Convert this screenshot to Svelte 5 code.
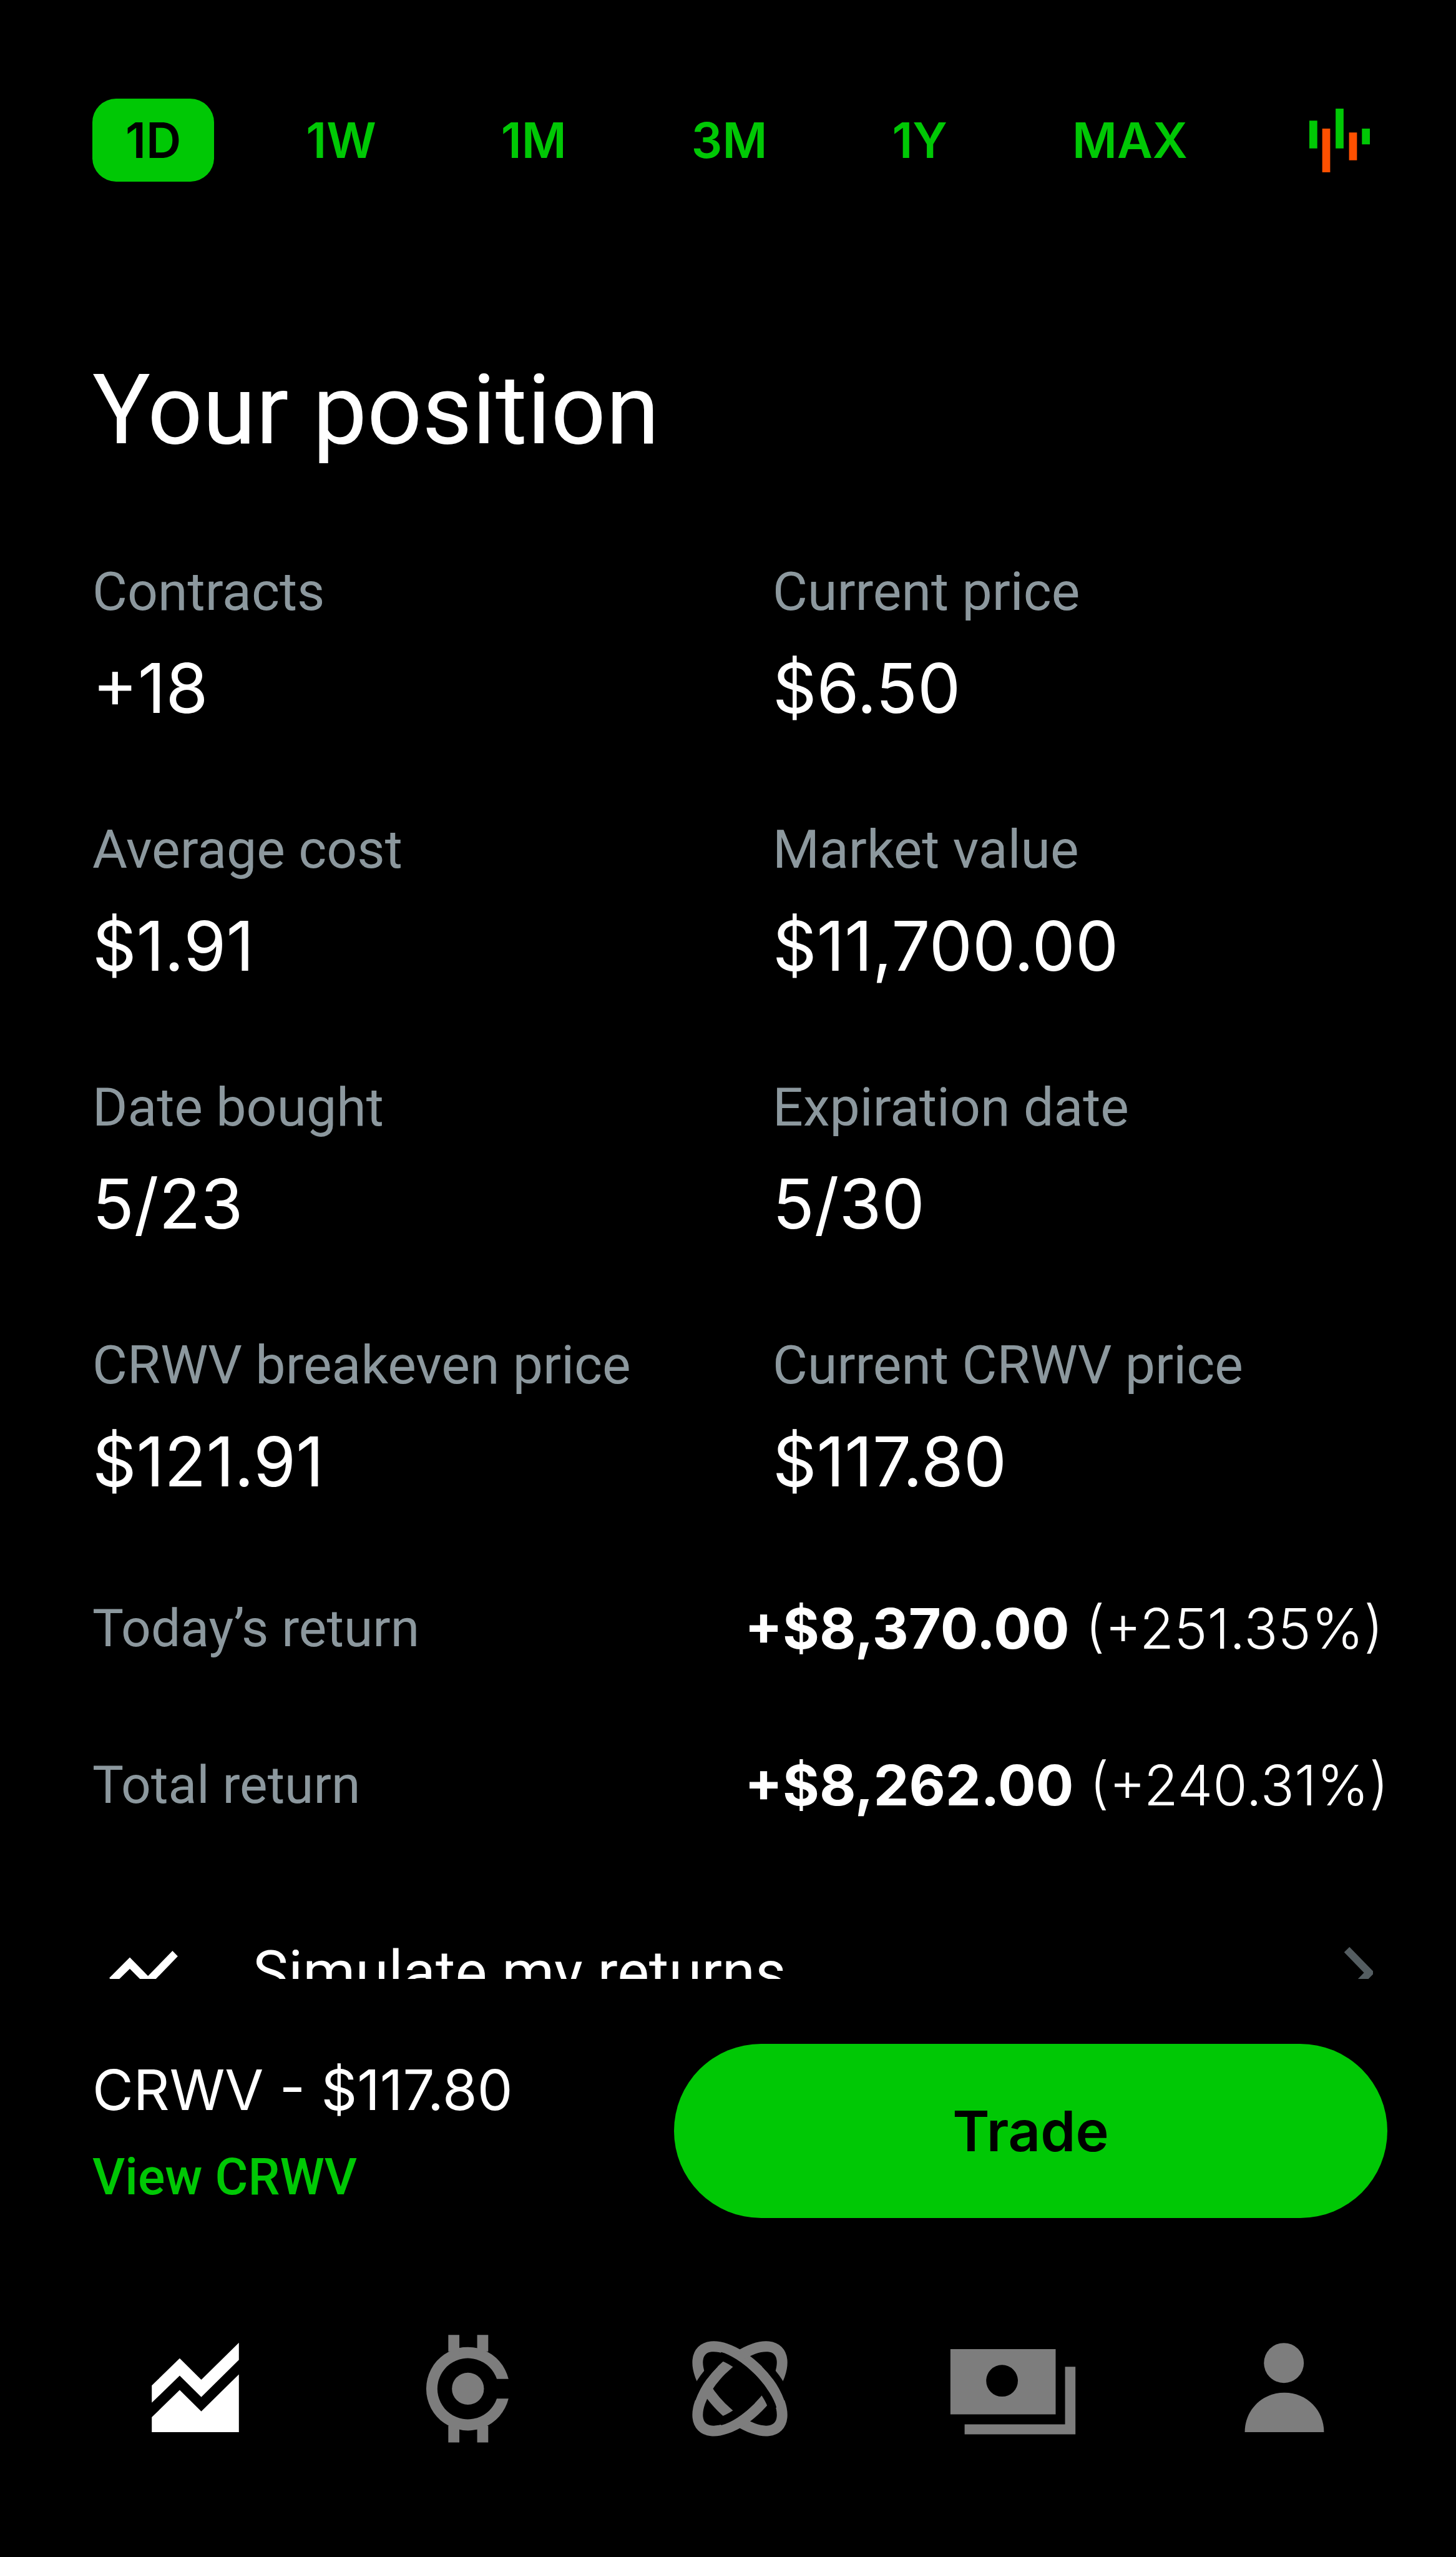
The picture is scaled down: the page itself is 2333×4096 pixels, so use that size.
<script>
  let range = $state('1D');

  const ranges = ['1D', '1W', '1M', '3M', '1Y', 'MAX'];

  const stats = [
    { label: 'Contracts', value: '+18' },
    { label: 'Current price', value: '$6.50' },
    { label: 'Average cost', value: '$1.91' },
    { label: 'Market value', value: '$11,700.00' },
    { label: 'Date bought', value: '5/23' },
    { label: 'Expiration date', value: '5/30' },
    { label: 'CRWV breakeven price', value: '$121.91' },
    { label: 'Current CRWV price', value: '$117.80' },
  ];

  const returns = [
    { label: 'Today’s return', amount: '+$8,370.00', percent: '(+251.35%)' },
    { label: 'Total return', amount: '+$8,262.00', percent: '(+240.31%)' },
  ];
</script>

<div class="app">
  <main>
    <div class="ranges">
      {#each ranges as r}
        <button class="range" class:active={range === r} onclick={() => (range = r)}>{r}</button>
      {/each}
      <button class="chart-type" aria-label="Candlestick chart">
        <svg viewBox="195 114 366 384">
          <path class="up" d="M195 186h48v168h-48zM354 114h48v240h-48zM513 234h48v96h-48z" />
          <path class="down" d="M273 234h48v264h-48zM435 258h48v168h-48z" />
        </svg>
      </button>
    </div>

    <h1>Your position</h1>

    <dl class="stats">
      {#each stats as stat}
        <div class="stat">
          <dt>{stat.label}</dt>
          <dd>{stat.value}</dd>
        </div>
      {/each}
    </dl>

    <dl class="returns">
      {#each returns as row}
        <div class="return">
          <dt>{row.label}</dt>
          <dd><strong>{row.amount}</strong> {row.percent}</dd>
        </div>
      {/each}
    </dl>

    <button class="simulate">
      <svg class="simulate-icon" viewBox="0 0 414 264">
        <path d="M0 164L124 40L234 152L382 0L414 33L234 219L124 108L33 197Z" />
      </svg>
      <span>Simulate my returns</span>
      <svg class="chevron" viewBox="0 0 46 82">
        <path d="M4 4L40 41L4 78" />
      </svg>
    </button>
  </main>

  <footer>
    <div class="trade-bar">
      <div class="quote">
        <span class="price">CRWV - $117.80</span>
        <a href="#crwv">View CRWV</a>
      </div>
      <button class="trade">Trade</button>
    </div>

    <nav>
      <!-- Investing -->
      <a class="current" href="#investing" aria-label="Investing" aria-current="page">
        <svg viewBox="12 0 840 840">
          <path d="M168 410L337 245L468 375L696 150V254L468 480L337 350L168 514Z" />
          <path d="M168 602L337 437L468 567L696 342V692H168Z" />
        </svg>
      </a>
      <!-- Crypto -->
      <a href="#crypto" aria-label="Crypto">
        <svg viewBox="-42 0 840 840">
          <path d="M627 370A253 253 0 1 0 627 489H556A185 185 0 1 1 556 370Z" />
          <path d="M262 103h67v100h-67zM437 103h67v100h-67zM262 655h67v100h-67zM437 655h67v100h-67z" />
          <circle cx="381" cy="429" r="97" />
        </svg>
      </a>
      <!-- Discover: two interlaced orbits -->
      <a href="#discover" aria-label="Discover">
        <svg viewBox="-17 0 840 840">
          <g class="orbit" transform="translate(405 429)">
            <ellipse rx="326" ry="158" transform="rotate(45)" />
            <ellipse rx="326" ry="158" transform="rotate(-45)" />
            <g class="gap" transform="rotate(45)">
              <path class="wide" d="M-225 -55A269 101 0 0 1 225 -55" />
              <path d="M0 -212A380 212 0 0 1 250 -160" />
            </g>
            <g class="gap" transform="rotate(-45)">
              <path class="wide" d="M-225 55A269 101 0 0 0 0 101" />
              <path d="M-250 -160A380 212 0 0 1 0 -212" />
            </g>
          </g>
        </svg>
      </a>
      <!-- Cash -->
      <a href="#cash" aria-label="Cash">
        <svg viewBox="46 0 840 840">
          <path fill-rule="evenodd" d="M91 189H729V585H91ZM404 285a96 96 0 1 0 0 192a96 96 0 1 0 0 -192Z" />
          <path d="M786 296H849V706H177V645H786Z" />
        </svg>
      </a>
      <!-- Account -->
      <a href="#account" aria-label="Account">
        <svg viewBox="-18 0 840 840">
          <circle cx="399" cy="273" r="121" />
          <path d="M162 692C162 560 265 453 402 453S642 560 642 692Z" />
        </svg>
      </a>
    </nav>
  </footer>
</div>

<style>
  :global(body) {
    margin: 0;
    background: #000;
  }

  .app {
    display: flex;
    flex-direction: column;
    height: 100vh;
    background: #000;
    color: #fff;
    font-family: Roboto, 'Liberation Sans', sans-serif;
  }

  button {
    padding: 0;
    border: 0;
    background: none;
    color: inherit;
    font: inherit;
    cursor: pointer;
  }

  a {
    color: #00c805;
    text-decoration: none;
  }

  svg {
    display: block;
    fill: currentColor;
  }

  dl,
  dd {
    margin: 0;
  }

  /* figures and controls are set in the wider face */
  dd,
  .price,
  .range,
  .trade {
    font-family: Inter, 'Liberation Sans', sans-serif;
  }

  main {
    flex: 1;
    min-height: 0;
    overflow: hidden;
    padding: 158px 110px 0 148px;
  }

  .ranges {
    display: flex;
    align-items: center;
    gap: 94px;
    margin-bottom: 276px;
  }

  .range {
    padding: 0 53px;
    border-radius: 38px;
    color: #00c805;
    font-size: 78px;
    font-weight: 600;
    line-height: 133px;
  }

  .range.active {
    background: #00c805;
    color: #000;
  }

  .chart-type {
    margin-left: auto;
    padding: 0 28px;
  }

  .chart-type svg {
    width: 97px;
    height: 102px;
  }

  .up {
    fill: #00c805;
  }

  .down {
    fill: #ff5000;
  }

  h1 {
    margin: 0 0 145px;
    font-size: 155px;
    font-weight: 400;
    line-height: 180px;
  }

  .stats {
    display: grid;
    grid-template-columns: 1090px 1fr;
    row-gap: 133px;
    margin-bottom: 142px;
  }

  dt {
    color: #8c989e;
    font-size: 86px;
    font-weight: 400;
    line-height: 112px;
  }

  .stat dd {
    margin-top: 28px;
    font-size: 110px;
    line-height: 140px;
  }

  .return {
    display: grid;
    grid-template-columns: 1fr 1030px;
    align-items: center;
    margin-bottom: 139px;
  }

  .return:last-child {
    margin-bottom: 188px;
  }

  .return dt {
    font-size: 84px;
  }

  .return dd {
    font-size: 90px;
    font-weight: 300;
    line-height: 112px;
    white-space: nowrap;
  }

  .return strong {
    font-weight: 700;
  }

  .simulate {
    display: flex;
    align-items: center;
    width: 100%;
    padding: 0 23px 0 27px;
    font-size: 96px;
    font-weight: 400;
    line-height: 112px;
  }

  .simulate-icon {
    width: 110px;
    height: 70px;
    margin-right: 120px;
  }

  .chevron {
    width: 46px;
    height: 82px;
    margin-left: auto;
    fill: none;
    stroke: #545d61;
    stroke-width: 12;
  }

  footer {
    padding-top: 104px;
    padding-bottom: 161px;
  }

  .trade-bar {
    display: grid;
    grid-template-columns: 1fr 1143px;
    align-items: center;
    padding: 0 110px 0 148px;
    margin-bottom: 160px;
  }

  .quote {
    display: flex;
    flex-direction: column;
    gap: 28px;
    padding-top: 8px;
  }

  .price {
    font-size: 90px;
    line-height: 112px;
  }

  .quote a {
    font-size: 81px;
    font-weight: 500;
    line-height: 112px;
  }

  .trade {
    border-radius: 140px;
    background: #00c805;
    color: #000;
    font-size: 90px;
    font-weight: 600;
    line-height: 279px;
  }

  nav {
    display: grid;
    grid-template-columns: repeat(5, 1fr);
    justify-items: center;
    padding: 0 57px 0 95px;
  }

  nav a {
    color: #7d7d7d;
  }

  nav a.current {
    color: #fff;
  }

  nav svg {
    width: 222px;
    height: 222px;
  }

  .orbit {
    fill: none;
    stroke: currentColor;
    stroke-width: 64;
  }

  .gap {
    stroke: #000;
    stroke-width: 44;
  }

  .gap .wide {
    stroke-width: 50;
  }
</style>
